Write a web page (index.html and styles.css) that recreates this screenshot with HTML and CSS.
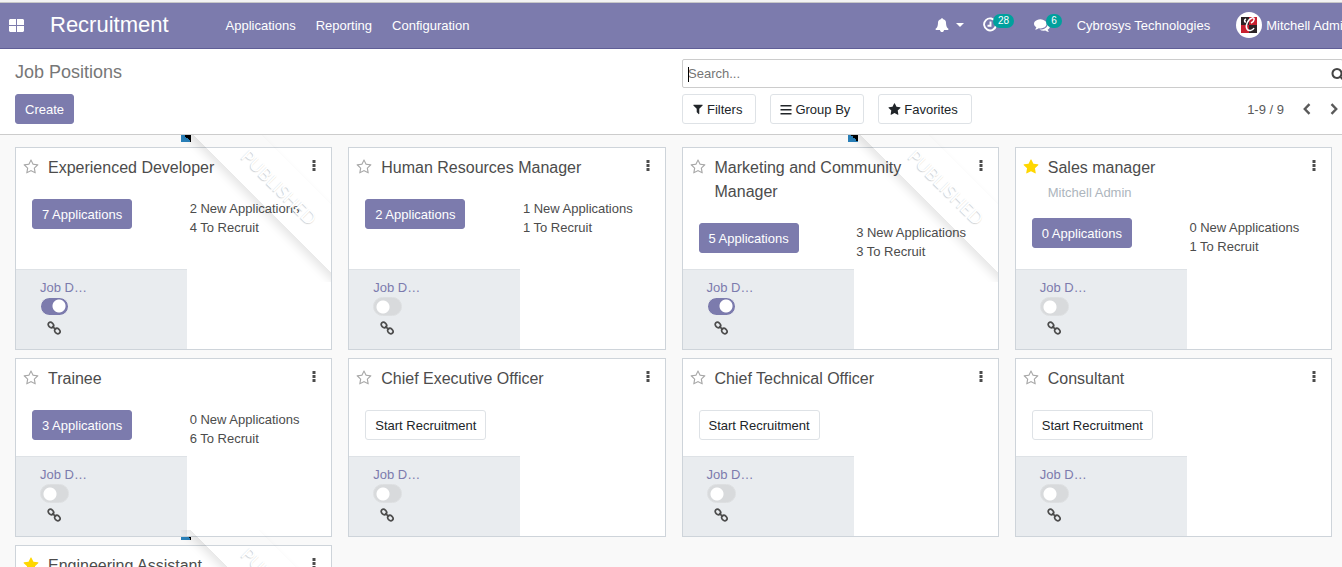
FILE: index.html
```
<!DOCTYPE html>
<html lang="en">
<head>
<meta charset="utf-8">
<title>Job Positions</title>
<link rel="stylesheet" href="styles.css">
</head>
<body>
<svg class="sprite" aria-hidden="true">
  <symbol id="star" viewBox="0 0 1792 1792"><path d="M1728 647q0 22-26 48l-363 354 86 500q1 7 1 20 0 21-10.5 35.5t-30.5 14.5q-19 0-40-12l-449-236-449 236q-22 12-40 12-21 0-31.5-14.5t-10.5-35.5q0-6 2-20l86-500-364-354q-25-27-25-48 0-37 56-46l502-73 225-455q19-41 49-41t49 41l225 455 502 73q56 9 56 46z"/></symbol>
  <symbol id="star-o" viewBox="0 0 1792 1792"><path d="M1201 1004l306-297-422-62-189-382-189 382-422 62 306 297-73 421 378-199 377 199zm527-357q0 22-26 48l-363 354 86 500q1 7 1 20 0 50-41 50-19 0-40-12l-449-236-449 236q-22 12-40 12-21 0-31.5-14.5t-10.5-35.5q0-6 2-20l86-500-364-354q-25-27-25-48 0-37 56-46l502-73 225-455q19-41 49-41t49 41l225 455 502 73q56 9 56 46z"/></symbol>
  <symbol id="dots" viewBox="0 0 4 11"><path d="M.5 0h3v3h-3zM.5 4h3v3h-3zM.5 8h3v3h-3z"/></symbol>
  <symbol id="chain" viewBox="0 0 14 14"><g fill="none" stroke="currentColor" stroke-width="1.7"><ellipse cx="3.900" cy="4" rx="3" ry="2.400" transform="rotate(45 3.900 4)"/><ellipse cx="10.300" cy="10" rx="3" ry="2.400" transform="rotate(45 10.300 10)"/><path d="M5.200 5.200l3.800 3.600"/></g></symbol>
</svg>

<header class="navbar">
  <a class="apps" href="#" aria-label="Apps"><svg width="15" height="13" viewBox="0 0 15 13"><path d="M1 0h6v6H0V1zM8 0h6l1 1v5H8zM0 7h7v6H1l-1-1zM8 7h7v5l-1 1H8z"/></svg></a>
  <a class="brand" href="#">Recruitment</a>
  <nav class="menu">
    <a href="#">Applications</a>
    <a href="#">Reporting</a>
    <a href="#">Configuration</a>
  </nav>
  <div class="systray">
    <button class="tray bell" type="button" aria-label="Notifications"><svg width="14" height="14" viewBox="0 0 1792 1792"><path d="M1728 1408q0 52-38 90t-90 38h-448q0 106-75 181t-181 75-181-75-75-181h-448q-52 0-90-38t-38-90q50-42 91-88t85-119.500 74.500-158.500 50-206 19.500-260q0-152 117-282.500t307-158.500q-8-19-8-39 0-40 28-68t68-28 68 28 28 68q0 20-8 39 190 28 307 158.500t117 282.500q0 139 19.500 260t50 206 74.500 158.500 85 119.500 91 88z"/></svg><span class="caret"></span></button>
    <button class="tray clock" type="button" aria-label="Activities"><svg width="14" height="16" viewBox="0 0 14 16"><path d="M12.500 4.800A6 6 0 1 0 13 8.500M7.500 4.500v4.200H4.500" fill="none" stroke="currentColor" stroke-width="1.900"/></svg><span class="badge">28</span></button>
    <button class="tray chat" type="button" aria-label="Messages"><svg width="16" height="16" viewBox="0 0 1792 1792"><path d="M1408 768q0 139-94 257t-256.500 186.500-353.500 68.500q-86 0-176-16-124 88-278 128-36 9-86 16h-3q-11 0-20.500-8t-11.500-21q-1-3-1-6.500t.5-6.500 2-6l2.500-5 3.500-5.500 4-5 4.500-5 4-4.500q5-6 23-25t26-29.500 22.500-29 25-38.500 20.500-44q-124-72-195-177t-71-224q0-139 94-257t256.500-186.500 353.500-68.500 353.500 68.500 256.500 186.500 94 257zm384 256q0 120-71 224.500t-195 176.500q10 24 20.500 44t25 38.500 22.500 29 26 29.500 23 25q1 1 4 4.500t4.500 5 4 5 3.500 5.500l2.500 5 2 6 .5 6.500-1 6.500q-3 14-13 22t-22 7q-50-7-86-16-154-40-278-128-90 16-176 16-271 0-472-132 58 4 88 4 161 0 309-45t264-129q125-92 192-212t67-254q0-77-23-152 129 71 204 178t75 230z"/></svg><span class="badge">6</span></button>
    <a class="company" href="#">Cybrosys Technologies</a>
    <a class="user" href="#"><svg width="26" height="26" viewBox="0 0 26 26"><circle cx="13" cy="13" r="13" fill="#fff"/><path d="M5 5h8v8H5zM13 13h8v8h-8z" fill="#2b2326"/><path d="M13 5h8v8h-8zM5 13h8v8H5z" fill="#c8202f"/><path d="M15 11c4-2 4-6 1-5-4 1-7 8-5 11 2 3 6 1 7-1M10 10c-2 0-2-2 0-3" fill="none" stroke="#fff" stroke-width="1.500"/></svg>Mitchell Admin</a>
  </div>
</header>

<section class="panel">
  <div class="panel-left">
    <h1 class="page-title">Job Positions</h1>
    <button class="btn primary" type="button">Create</button>
  </div>
  <div class="panel-right">
    <div class="search">
      <input type="text" aria-label="Search" placeholder="Search...">
      <button class="icon-btn" type="button" aria-label="Search"><svg width="14" height="14" viewBox="0 0 1792 1792"><path d="M1216 832q0-185-131.500-316.500t-316.500-131.500-316.500 131.500-131.500 316.500 131.500 316.500 316.500 131.500 316.500-131.500 131.500-316.500zm512 832q0 52-38 90t-90 38q-54 0-90-38l-343-342q-179 124-399 124-143 0-273.500-55.500t-225-150-150-225-55.500-273.500 55.500-273.500 150-225 225-150 273.500-55.500 273.500 55.500 225 150 150 225 55.500 273.500q0 220-124 399l343 343q37 37 37 90z"/></svg></button>
    </div>
    <div class="tools">
      <button class="btn plain" type="button"><svg width="12" height="12" viewBox="0 0 1792 1792"><path d="M1595 295q17 41-14 70l-493 493v742q0 42-39 59-13 5-25 5-27 0-45-19l-256-256q-19-19-19-45v-486l-493-493q-31-29-14-70 17-39 59-39h1280q42 0 59 39z"/></svg>Filters</button>
      <button class="btn plain" type="button"><svg width="12" height="11" viewBox="0 0 12 11"><path d="M.5 1h11v1.500h-11zM.5 5h11v1.500h-11zM.5 9h11v1.500h-11z"/></svg>Group By</button>
      <button class="btn plain" type="button"><svg width="13" height="13"><use href="#star"/></svg>Favorites</button>
      <div class="pager">
        <span>1-9 / 9</span>
        <button class="icon-btn" type="button" aria-label="Previous"><svg width="8" height="12" viewBox="0 0 8 12"><path d="M6.500 1.200L1.800 6l4.700 4.800" fill="none" stroke="currentColor" stroke-width="2.400"/></svg></button>
        <button class="icon-btn" type="button" aria-label="Next"><svg width="8" height="12" viewBox="0 0 8 12"><path d="M1.500 1.200L6.200 6l-4.700 4.800" fill="none" stroke="currentColor" stroke-width="2.400"/></svg></button>
      </div>
    </div>
  </div>
</section>

<main class="board">
  <article class="card">
    <div class="ribbon"><span>Published</span></div>
    <div class="head"><button class="fav" type="button" aria-label="Favorite"><svg width="16" height="16"><use href="#star-o"/></svg></button><h2>Experienced Developer</h2><button class="more" type="button" aria-label="More"><svg width="4" height="11"><use href="#dots"/></svg></button></div>
    <div class="body"><div><button class="btn primary" type="button">7 Applications</button></div><div class="stats"><a href="#">2 New Applications</a><span>4 To Recruit</span></div></div>
    <div class="foot"><label for="j1">Job D…</label><input class="switch" id="j1" type="checkbox" checked><a href="#" aria-label="Link"><svg width="14" height="14"><use href="#chain"/></svg></a></div>
  </article>
  <article class="card">
    <div class="head"><button class="fav" type="button" aria-label="Favorite"><svg width="16" height="16"><use href="#star-o"/></svg></button><h2>Human Resources Manager</h2><button class="more" type="button" aria-label="More"><svg width="4" height="11"><use href="#dots"/></svg></button></div>
    <div class="body"><div><button class="btn primary" type="button">2 Applications</button></div><div class="stats"><a href="#">1 New Applications</a><span>1 To Recruit</span></div></div>
    <div class="foot"><label for="j2">Job D…</label><input class="switch" id="j2" type="checkbox"><a href="#" aria-label="Link"><svg width="14" height="14"><use href="#chain"/></svg></a></div>
  </article>
  <article class="card">
    <div class="ribbon"><span>Published</span></div>
    <div class="head"><button class="fav" type="button" aria-label="Favorite"><svg width="16" height="16"><use href="#star-o"/></svg></button><h2>Marketing and Community Manager</h2><button class="more" type="button" aria-label="More"><svg width="4" height="11"><use href="#dots"/></svg></button></div>
    <div class="body"><div><button class="btn primary" type="button">5 Applications</button></div><div class="stats"><a href="#">3 New Applications</a><span>3 To Recruit</span></div></div>
    <div class="foot"><label for="j3">Job D…</label><input class="switch" id="j3" type="checkbox" checked><a href="#" aria-label="Link"><svg width="14" height="14"><use href="#chain"/></svg></a></div>
  </article>
  <article class="card">
    <div class="head"><button class="fav on" type="button" aria-label="Favorite"><svg width="16" height="16"><use href="#star"/></svg></button><div class="titles"><h2>Sales manager</h2><p class="manager">Mitchell Admin</p></div><button class="more" type="button" aria-label="More"><svg width="4" height="11"><use href="#dots"/></svg></button></div>
    <div class="body"><div><button class="btn primary" type="button">0 Applications</button></div><div class="stats"><a href="#">0 New Applications</a><span>1 To Recruit</span></div></div>
    <div class="foot"><label for="j4">Job D…</label><input class="switch" id="j4" type="checkbox"><a href="#" aria-label="Link"><svg width="14" height="14"><use href="#chain"/></svg></a></div>
  </article>
  <article class="card">
    <div class="head"><button class="fav" type="button" aria-label="Favorite"><svg width="16" height="16"><use href="#star-o"/></svg></button><h2>Trainee</h2><button class="more" type="button" aria-label="More"><svg width="4" height="11"><use href="#dots"/></svg></button></div>
    <div class="body"><div><button class="btn primary" type="button">3 Applications</button></div><div class="stats"><a href="#">0 New Applications</a><span>6 To Recruit</span></div></div>
    <div class="foot"><label for="j5">Job D…</label><input class="switch" id="j5" type="checkbox"><a href="#" aria-label="Link"><svg width="14" height="14"><use href="#chain"/></svg></a></div>
  </article>
  <article class="card">
    <div class="head"><button class="fav" type="button" aria-label="Favorite"><svg width="16" height="16"><use href="#star-o"/></svg></button><h2>Chief Executive Officer</h2><button class="more" type="button" aria-label="More"><svg width="4" height="11"><use href="#dots"/></svg></button></div>
    <div class="body"><div><button class="btn plain" type="button">Start Recruitment</button></div></div>
    <div class="foot"><label for="j6">Job D…</label><input class="switch" id="j6" type="checkbox"><a href="#" aria-label="Link"><svg width="14" height="14"><use href="#chain"/></svg></a></div>
  </article>
  <article class="card">
    <div class="head"><button class="fav" type="button" aria-label="Favorite"><svg width="16" height="16"><use href="#star-o"/></svg></button><h2>Chief Technical Officer</h2><button class="more" type="button" aria-label="More"><svg width="4" height="11"><use href="#dots"/></svg></button></div>
    <div class="body"><div><button class="btn plain" type="button">Start Recruitment</button></div></div>
    <div class="foot"><label for="j7">Job D…</label><input class="switch" id="j7" type="checkbox"><a href="#" aria-label="Link"><svg width="14" height="14"><use href="#chain"/></svg></a></div>
  </article>
  <article class="card">
    <div class="head"><button class="fav" type="button" aria-label="Favorite"><svg width="16" height="16"><use href="#star-o"/></svg></button><h2>Consultant</h2><button class="more" type="button" aria-label="More"><svg width="4" height="11"><use href="#dots"/></svg></button></div>
    <div class="body"><div><button class="btn plain" type="button">Start Recruitment</button></div></div>
    <div class="foot"><label for="j8">Job D…</label><input class="switch" id="j8" type="checkbox"><a href="#" aria-label="Link"><svg width="14" height="14"><use href="#chain"/></svg></a></div>
  </article>
  <article class="card">
    <div class="ribbon"><span>Published</span></div>
    <div class="head"><button class="fav on" type="button" aria-label="Favorite"><svg width="16" height="16"><use href="#star"/></svg></button><h2>Engineering Assistant</h2><button class="more" type="button" aria-label="More"><svg width="4" height="11"><use href="#dots"/></svg></button></div>
  </article>
</main>
</body>
</html>
```
FILE: styles.css
```
* { box-sizing: border-box; }
html, body { height: 100%; }
body {
  margin: 0;
  display: flex;
  flex-direction: column;
  overflow: hidden;
  background: #f9f9f9;
  color: #4c4c4c;
  font: 13px/19px "Liberation Sans", Arial, sans-serif;
}
a { color: inherit; text-decoration: none; }
button { font: inherit; color: inherit; border: 0; padding: 0; background: none; cursor: pointer; }
svg { display: block; flex: none; fill: currentColor; }
h1, h2, p { margin: 0; font-weight: 400; }
.sprite { position: absolute; width: 0; height: 0; }

.navbar {
  flex: none;
  display: flex;
  align-items: center;
  height: 49px;
  padding-left: 9px;
  background: #7c7bad;
  border-top: 2px solid #f3f3f3;
  border-bottom: 1px solid #5f5e97;
  box-shadow: inset 0 1px #c8c8c8;
  color: #fff;
  white-space: nowrap;
}
.brand { margin-left: 26px; font-size: 22px; line-height: 32px; }
.menu { display: flex; gap: 20px; margin-left: 57px; }
.systray { display: flex; align-items: center; margin: 0 -8px 0 auto; }
.tray { display: flex; align-items: center; }
.caret { border: 4px solid transparent; border-top-color: #fff; border-bottom: 0; margin-left: 7px; }
.clock { margin-left: 19px; }
.chat { margin-left: 20px; }
.badge {
  margin: -8px 0 0 -4px;
  padding: 0 5px;
  border-radius: 7px;
  background: #00a09d;
  font-size: 10px;
  line-height: 14px;
}
.company { margin-left: 15px; }
.user { display: flex; align-items: center; gap: 4px; margin-left: 26px; }

.panel {
  flex: none;
  display: grid;
  grid-template-columns: 1fr 1fr;
  gap: 6px;
  width: calc(100% + 16px);
  padding: 10px 15px;
  background: #fff;
  border-bottom: 1px solid #ccc;
}
.panel-left, .panel-right { display: flex; flex-direction: column; justify-content: space-between; align-items: flex-start; }
.panel-right { align-items: stretch; gap: 6px; }
.page-title { font-size: 18px; line-height: 26px; color: #777; }
.btn {
  display: inline-flex;
  align-items: center;
  gap: 3px;
  height: 30px;
  padding: 0 9px;
  border: 1px solid #dee2e6;
  border-radius: 3px;
  white-space: nowrap;
}
.btn.primary { background: #7c7bad; border-color: #7c7bad; color: #fff; }
.btn.plain { background: #fff; color: #212529; }
.tools .btn { padding-right: 13px; }
.search {
  position: relative;
  display: flex;
  align-items: center;
  height: 29px;
  border: 1px solid #ccc;
  border-radius: 2px;
  overflow: hidden;
}
.search::before { content: ""; position: absolute; left: 5px; top: 7px; width: 1px; height: 15px; background: #000; }
.search input { flex: 1; min-width: 0; padding: 0 5px; border: 0; outline: 0; font: inherit; color: inherit; background: none; }
.search input::placeholder { color: #757575; opacity: 1; }
.search .icon-btn { margin-right: -3px; color: #444; }
.tools { display: flex; gap: 14px; }
.pager { display: flex; align-items: center; gap: 19px; margin: 0 5px 0 auto; color: #5a5a5a; }

.board {
  position: relative;
  z-index: 0;
  flex: 1;
  min-height: 0;
  overflow: hidden;
  display: grid;
  grid-template-columns: repeat(4, 1fr);
  grid-auto-rows: max-content;
  gap: 8px 16px;
  padding: 12px 10px 0 15px;
}
.card {
  position: relative;
  display: flex;
  flex-direction: column;
  padding-top: 8px;
  background: #fff;
  border: 1px solid #ced4da;
}
.head { display: flex; align-items: flex-start; gap: 9px; margin: 0 15px 19px 7px; }
.fav { color: #a8a8a8; padding-top: 3px; }
.fav.on { color: #ffd700; }
.head h2 { font-size: 16px; line-height: 24px; padding-right: 40px; }
.manager { color: #adb5bd; margin: 3px 0 -3px; }
.more { margin-left: auto; padding-top: 4px; }
.body { display: grid; grid-template-columns: 1fr 1fr; padding: 0 0 16px 16px; min-height: 46px; }
.body > div { height: 30px; }
.stats { display: flex; flex-direction: column; padding-left: 8px; }
.foot {
  margin-top: auto;
  width: 171px;
  height: 80px;
  display: flex;
  flex-direction: column;
  align-items: flex-start;
  padding: 8px 24px;
  background: #e9ecef;
  border-top: 1px solid #dee2e6;
}
.foot label { color: #7c7bad; }
.foot a { margin: 5px 0 0 7px; }
.switch {
  appearance: none;
  width: 29px;
  height: 19px;
  margin: 0;
  border: 1px solid #dddfe1;
  border-radius: 10px;
  background: radial-gradient(circle at 9px 9px, #fff 6px, #d8dadc 7px);
}
.switch:checked { border-color: #e9ecef; background: radial-gradient(circle at 18px 8px, #fff 6px, #7c7bad 7px); }

.ribbon {
  position: absolute;
  top: -16px;
  right: 0;
  width: 150px;
  height: 150px;
  overflow: hidden;
  pointer-events: none;
}
.ribbon span {
  position: absolute;
  left: -14px;
  top: 31px;
  width: 225px;
  padding: 15px 0;
  box-shadow: 0 5px 10px rgba(0, 0, 0, .1);
  color: #fff;
  font: 18px/18px Lato, sans-serif;
  text-align: center;
  text-transform: uppercase;
  text-shadow: 0 1px 1px rgba(0, 0, 0, .2);
  transform: rotate(45deg);
}
.card:has(.ribbon)::before {
  content: "";
  position: absolute;
  z-index: -1;
  top: -16px;
  right: 140px;
  width: 10px;
  height: 10px;
  background: linear-gradient(45deg, #2980b9 50%, #000 50%);
}
```
